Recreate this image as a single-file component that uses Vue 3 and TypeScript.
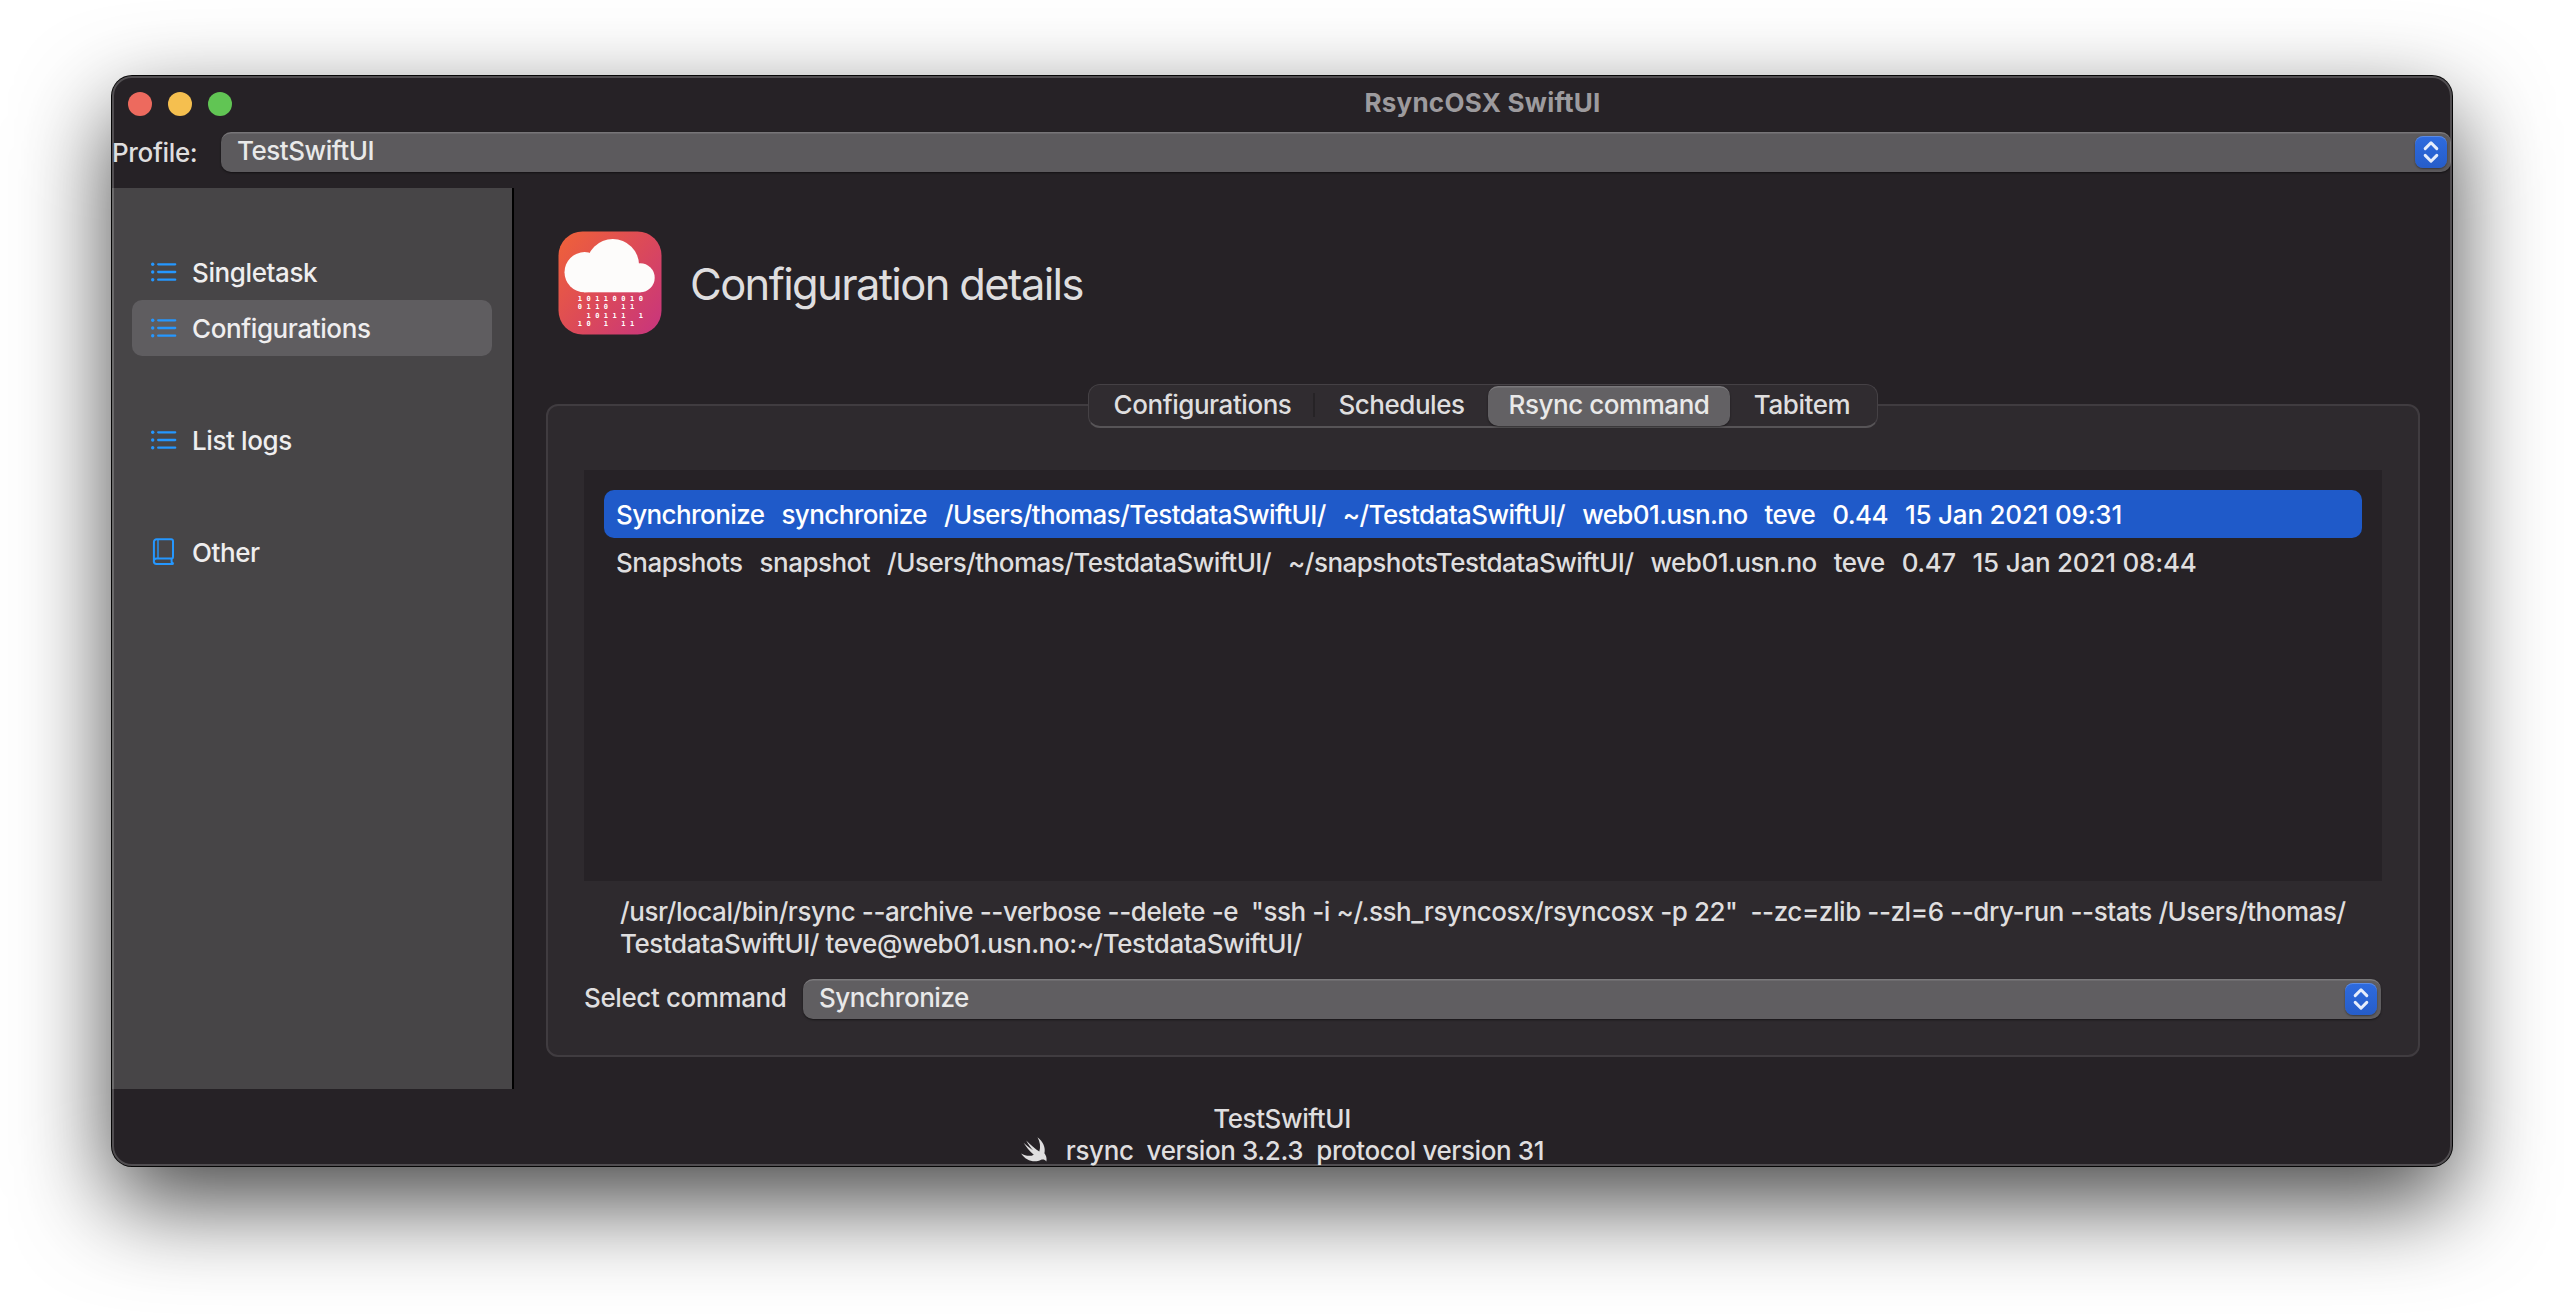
<script setup lang="ts">
interface NavItem {
  label: string
  icon: 'list' | 'book'
  slot: string
  active?: boolean
}

const nav: NavItem[] = [
  { label: 'Singletask', icon: 'list', slot: 'single' },
  { label: 'Configurations', icon: 'list', slot: 'config', active: true },
  { label: 'List logs', icon: 'list', slot: 'logs' },
  { label: 'Other', icon: 'book', slot: 'other' },
]

const tabs = [
  { label: 'Configurations', slot: 't-config' },
  { label: 'Schedules', slot: 't-sched' },
  { label: 'Rsync command', slot: 't-rsync', active: true },
  { label: 'Tabitem', slot: 't-item' },
]

const rows: string[][] = [
  ['Synchronize', 'synchronize', '/Users/thomas/TestdataSwiftUI/', '~/TestdataSwiftUI/', 'web01.usn.no', 'teve', '0.44', '15 Jan 2021 09:31'],
  ['Snapshots', 'snapshot', '/Users/thomas/TestdataSwiftUI/', '~/snapshotsTestdataSwiftUI/', 'web01.usn.no', 'teve', '0.47', '15 Jan 2021 08:44'],
]

const command = [
  '/usr/local/bin/rsync --archive --verbose --delete -e  "ssh -i ~/.ssh_rsyncosx/rsyncosx -p 22"  --zc=zlib --zl=6 --dry-run --stats /Users/thomas/',
  'TestdataSwiftUI/ teve@web01.usn.no:~/TestdataSwiftUI/',
]

const version = 'rsync  version 3.2.3  protocol version 31'

// Binary digits falling from the cloud in the app icon
const rain = ['10110010', '0110 11 ', ' 10111 1', '10 1 11 ']
const drops = rain
  .flatMap((line, r) => line.split('').map((digit, c) => ({ digit, x: 21.8 + c * 8.72, y: 69.9 + r * 8.35 })))
  .filter((d) => d.digit !== ' ')
</script>

<template>
  <div class="stage">
    <div class="window">
      <header class="titlebar">
        <div class="lights"><i class="red" /><i class="yellow" /><i class="green" /></div>
        <div class="title">RsyncOSX SwiftUI</div>
      </header>
      <div class="profile">
        <span class="profile-label">Profile:</span>
        <div class="popup">
          <span>TestSwiftUI</span>
          <b class="stepper"><svg width="32" height="32" viewBox="0 0 32 32"><path d="M10.2 12.6 16 6.8l5.8 5.8M10.2 19.4l5.8 5.8 5.8-5.8" /></svg></b>
        </div>
      </div>
      <div class="body">
        <nav class="sidebar">
          <div v-for="n in nav" :key="n.label" class="nav" :class="[n.slot, { active: n.active }]">
            <svg v-if="n.icon === 'list'" width="28" height="28" viewBox="0 0 28 28">
              <path d="M8.2 6.3h17M8.2 14h17M8.2 21.7h17" stroke-width="2.3" stroke-linecap="round" fill="none" />
              <g class="dots"><circle cx="2.7" cy="6.3" r="1.7" /><circle cx="2.7" cy="14" r="1.7" /><circle cx="2.7" cy="21.7" r="1.7" /></g>
            </svg>
            <svg v-else width="28" height="28" viewBox="0 0 28 28" fill="none" stroke-width="2">
              <path d="M22.8 20.6H6.5a2.7 2.7 0 0 0 0 5.4h17M3.9 23.3V4a2.8 2.8 0 0 1 2.8-2.8h14.4A1.9 1.9 0 0 1 23 3.1v15.6a1.9 1.9 0 0 1-1.9 1.9M21.6 20.8v3.2l1.9 2" />
              <path d="M8 1.4V20.4" stroke-width="1.4" />
            </svg>
            <span>{{ n.label }}</span>
          </div>
        </nav>
        <main class="content">
          <div class="heading">
            <svg class="app-icon" width="104" height="104" viewBox="0 0 104 104">
              <defs>
                <linearGradient id="sky" x1="0" y1="0.1" x2="1" y2="0.9">
                  <stop offset="0" stop-color="#ee603b" />
                  <stop offset="0.5" stop-color="#dc4a58" />
                  <stop offset="1" stop-color="#c9367b" />
                </linearGradient>
              </defs>
              <rect x="0.5" y="0.5" width="103" height="103" rx="24" fill="url(#sky)" />
              <g fill="#fdfcfb">
                <circle cx="54.8" cy="34.3" r="26.3" />
                <circle cx="26.6" cy="41.2" r="20.1" />
                <circle cx="82.2" cy="46.8" r="14.5" />
                <rect x="26" y="38" width="56.5" height="23.3" />
              </g>
              <text v-for="(d, i) in drops" :key="i" :x="d.x" :y="d.y" class="drop">{{ d.digit }}</text>
            </svg>
            <h1>Configuration details</h1>
          </div>
          <section class="panel">
            <div class="tabs">
              <div v-for="t in tabs" :key="t.label" class="tab" :class="[t.slot, { active: t.active }]">{{ t.label }}</div>
            </div>
            <div class="list">
              <div v-for="(r, i) in rows" :key="i" class="row" :class="{ selected: i === 0 }">
                <span v-for="(c, j) in r" :key="j" :class="{ date: j === r.length - 1 }">{{ c }}</span>
              </div>
            </div>
            <div class="command">
              <div v-for="(line, i) in command" :key="i">{{ line }}</div>
            </div>
            <div class="select">
              <span class="select-label">Select command</span>
              <div class="popup">
                <span>Synchronize</span>
                <b class="stepper"><svg width="32" height="32" viewBox="0 0 32 32"><path d="M10.2 12.6 16 6.8l5.8 5.8M10.2 19.4l5.8 5.8 5.8-5.8" /></svg></b>
              </div>
            </div>
          </section>
        </main>
      </div>
      <footer class="footer">
        <div class="foot-name">TestSwiftUI</div>
        <div class="version">
          <svg width="28" height="28" viewBox="0 0 28 28">
            <path d="M17.5 1.2c5.6 4.2 8.4 10.5 6.9 16 2.5 3.2 2.4 6.6 1.9 8.3-1.5-2.4-3.7-2.4-5.2-1.7-6.7 3.5-15.4.9-20-6.3 4.3 2.5 9.3 3.2 12.7 1.2C9.6 15.5 6 10.6 3.6 6.7c3.3 3 6.9 5.9 9.4 7.5C10.7 11.5 8.2 8 6.2 4.4c4.4 4.3 9.3 8.6 13.1 11.1 1.5-4.5.8-9.9-1.8-14.3z" />
          </svg>
          <span>{{ version }}</span>
        </div>
      </footer>
      <div class="rim" />
    </div>
  </div>
</template>

<style>
body {
  background: #fff;
}
</style>

<style scoped>
.stage {
  box-sizing: border-box;
  width: 2564px;
  height: 1314px;
  padding: 76px 112px 148px;
  overflow: hidden;
  background: #fff;
  font-family: Inter, 'Liberation Sans', sans-serif;
  font-size: 26px;
  font-weight: 450;
  line-height: 32px;
  letter-spacing: -0.4px;
  color: #dfdedf;
}
.stage * {
  box-sizing: border-box;
}
.window {
  position: relative;
  display: flex;
  flex-direction: column;
  width: 2340px;
  height: 1090px;
  border-radius: 20px;
  background: #262226;
  box-shadow: 0 0 0 1px #060606, 0 36px 94px rgba(0, 0, 0, 0.73);
}
.rim {
  position: absolute;
  inset: 0;
  border: 2px solid rgba(255, 255, 255, 0.2);
  border-radius: 20px;
}
.titlebar {
  display: flex;
  flex: none;
  height: 56px;
  padding-left: 16px;
}
.lights {
  display: flex;
  gap: 16px;
  padding-top: 16px;
  width: 384px;
}
.lights i {
  width: 24px;
  height: 24px;
  border-radius: 50%;
}
.red { background: #ed6a5e; }
.yellow { background: #f5bf4f; }
.green { background: #61c554; }
.title {
  flex: 1;
  margin-left: 4px;
  padding: 11px 3px 0 0;
  text-align: center;
  font-weight: 700;
  letter-spacing: 0.25px;
  color: #9d9b9e;
}
.profile {
  display: flex;
  flex: none;
  height: 56px;
  padding-right: 1px;
}
.profile-label {
  width: 109px;
  padding-top: 5px;
  letter-spacing: -0.35px;
}
.popup {
  display: flex;
  flex: 1;
  align-items: flex-start;
  justify-content: space-between;
  height: 40px;
  padding: 3px 4px 0 16px;
  border-radius: 10px;
  background: #5c5a5d;
  box-shadow: inset 0 2px 0 -0.5px rgba(255, 255, 255, 0.17), 0 1px 2px rgba(0, 0, 0, 0.5);
  letter-spacing: -0.45px;
  color: #e9e9e9;
}
.stepper {
  width: 32px;
  height: 32px;
  margin-top: 1px;
  border-radius: 8px;
  background: linear-gradient(#2e6bdf, #265dc9);
  box-shadow: inset 0 1px 0 rgba(255, 255, 255, 0.22), 0 1px 2px rgba(0, 0, 0, 0.4);
}
.stepper svg {
  display: block;
  fill: none;
  stroke: #e6edfb;
  stroke-width: 3;
  stroke-linecap: round;
  stroke-linejoin: round;
}
.body {
  display: flex;
  flex: none;
  height: 901px;
}
.sidebar {
  width: 402px;
  padding: 56px 20px 0;
  border-right: 2px solid #000;
  background: #474547;
}
.nav {
  display: flex;
  align-items: center;
  height: 56px;
  padding-left: 18px;
  border-radius: 10px;
  color: #efeeef;
}
.nav span {
  padding-top: 2px;
}
.nav svg {
  width: 28px;
  margin-right: 14px;
  stroke: #2597ff;
}
.nav .dots {
  fill: #2597ff;
  stroke: none;
}
.nav.active {
  background: #5f5d60;
}
.logs,
.other {
  margin-top: 56px;
}
.content {
  display: flex;
  flex: 1;
  flex-direction: column;
  padding: 43px 32px 0;
}
.heading {
  display: flex;
  height: 173px;
}
.app-icon {
  margin-left: 12px;
}
.drop {
  font: 700 7px 'DejaVu Sans Mono', monospace;
  letter-spacing: 0;
  text-anchor: middle;
  fill: #fff;
}
h1 {
  margin: 27px 0 0 28px;
  font-size: 43.5px;
  font-weight: 400;
  line-height: 52px;
  letter-spacing: -1.63px;
}
.panel {
  display: flex;
  flex-direction: column;
  height: 653px;
  padding: 0 36px;
  border: 2px solid #403c40;
  border-radius: 12px;
  background: #2e2a2e;
}
.tabs {
  display: flex;
  flex: none;
  align-self: center;
  width: 790px;
  height: 44px;
  margin-top: -22px;
  padding: 0 3px 0 1px;
  border: 1px solid #454145;
  border-bottom: 2px solid #575457;
  border-radius: 12px;
  background: #302c30;
}
.tab {
  display: flex;
  align-items: center;
  justify-content: center;
  height: 40px;
  margin-top: 1px;
  padding-bottom: 2px;
  letter-spacing: -0.45px;
}
.t-config { width: 225px; }
.t-sched { width: 173px; }
.t-rsync { width: 242px; }
.t-item { flex: 1; }
.t-config::after {
  content: '';
  width: 2px;
  height: 24px;
  margin-right: -24px;
  margin-left: 22px;
  background: #262326;
}
.tab.active {
  border-radius: 10px;
  background: #636164;
  box-shadow: inset 0 2px 0 -0.5px rgba(255, 255, 255, 0.15), 0 1px 2px rgba(0, 0, 0, 0.45);
  color: #e9e9e9;
}
.list {
  flex: none;
  height: 411px;
  margin-top: 42px;
  padding: 20px;
  background: #262226;
}
.row {
  display: flex;
  align-items: center;
  gap: 17px;
  height: 48px;
  padding: 2px 12px 0;
  border-radius: 10px;
  letter-spacing: -0.52px;
  white-space: nowrap;
}
.row.selected {
  background: #1f5ac9;
  color: #fff;
  letter-spacing: -0.59px;
}
.row .date {
  letter-spacing: -0.22px;
}
.command {
  flex: none;
  height: 98px;
  padding: 15px 0 0 36px;
  letter-spacing: -0.435px;
  white-space: pre;
}
.select {
  display: flex;
  padding-right: 1px;
}
.select-label {
  width: 219px;
  padding-top: 3px;
}
.select .popup {
  background: #605e61;
}
.footer {
  flex: 1;
  padding-top: 14px;
  text-align: center;
}
.version {
  display: flex;
  justify-content: center;
  white-space: pre;
}
.version svg {
  margin: 1px 18px 0 0;
  fill: #dfdedf;
}
</style>
